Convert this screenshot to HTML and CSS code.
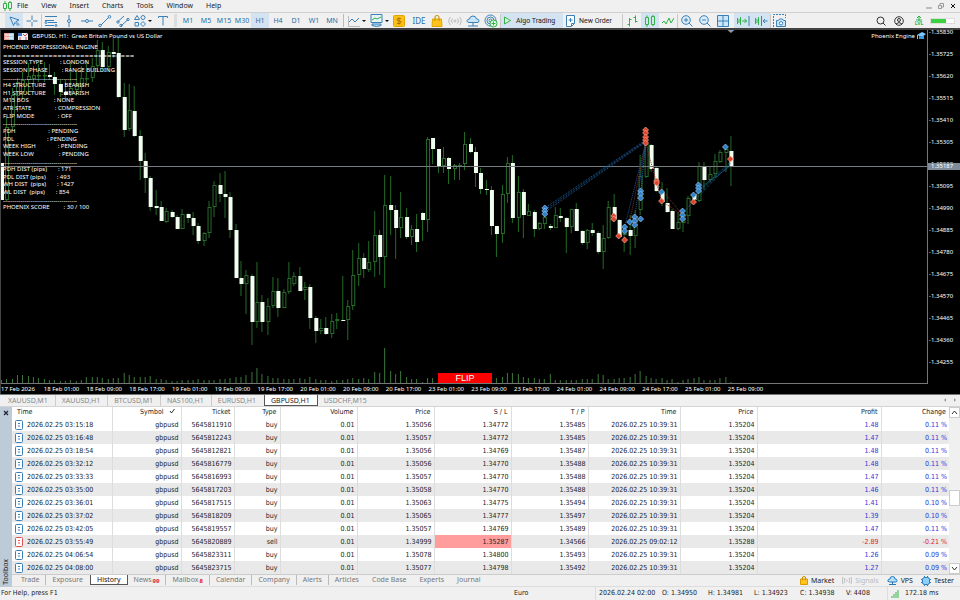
FILE: index.html
```
<!DOCTYPE html>
<html lang="en">

<head>
    <meta charset="UTF-8">
    <meta name="viewport" content="width=device-width, initial-scale=1.0">
    <title>GBPUSD,H1</title>
    <link rel="stylesheet" href="styles.css">
</head>

<body>
    <!-- menu -->
    <nav class="menu">
        <svg class="logo" width="9" height="10" viewBox="0 0 9 10"><path d="M2 0v10M7 0v10" stroke="#2fb344"/><path d="M.5 2.5h3v5h-3zM5.5 1.5h3v6h-3z" fill="#f0f0f0" stroke="#2fb344"/></svg>
        <a href="#">File</a>
        <a href="#">View</a>
        <a href="#">Insert</a>
        <a href="#">Charts</a>
        <a href="#">Tools</a>
        <a href="#">Window</a>
        <a href="#">Help</a>
        <div class="winBtns">
            <button aria-label="Minimize"><svg width="6" height="6"><path d="M0 5h6" stroke="#888"/></svg></button>
            <button aria-label="Restore"><svg width="6" height="6"><path d="M.5 2.5h3v3h-3zM2 2V.5h3.500V4H4" fill="none" stroke="#999"/></svg></button>
            <button aria-label="Close"><svg width="6" height="6"><path d="M1 1l4 4M5 1L1 5" stroke="#111"/></svg></button>
        </div>
    </nav>

    <!-- toolbar -->
    <div class="toolbar">
        <button class="on" aria-label="Cursor"><svg width="12" height="12"><path d="M2 2l3.500 8.500 1.500-3 3 3 1-1-3-3 3-1.500z"/></svg></button>
        <button aria-label="Crosshair"><svg width="12" height="12"><path d="M6 .5v4.500M6 7v4.500M.5 6H5M7 6h4.500"/></svg></button>
        <i class="sep"></i>
        <button aria-label="Lines"><svg width="14" height="12"><path d="M1 1.500h12M1 5.500h9M1 10.500h9M4 7.500h9"/><circle cx="2" cy="7.500" r="1"/><circle cx="12" cy="10.500" r="1"/></svg></button>
        <button aria-label="Vertical line"><svg width="12" height="12"><path d="M6 0v4M6 8v4"/><circle cx="6" cy="6" r="1.500"/></svg></button>
        <button aria-label="Horizontal line"><svg width="12" height="12"><path d="M0 6h4M8 6h4"/><circle cx="6" cy="6" r="1.500"/></svg></button>
        <button aria-label="Trendline"><svg width="14" height="12"><path d="M3 10l7.500-7.500"/><circle cx="2" cy="10.500" r="1.300"/><circle cx="11.500" cy="1.800" r="1.300"/></svg></button>
        <button aria-label="Channel"><svg width="14" height="12"><path d="M2 6.500L8 1M5 11l7-6.500"/><circle cx="2" cy="7" r="1.200"/><circle cx="5" cy="10.500" r="1.200"/><circle cx="12" cy="4.500" r="1.200"/></svg></button>
        <button class="wide" aria-label="Shapes"><svg width="12" height="12"><path d="M.5 4.500L3 .5l2.500 4zM1 7.500h3.500v3.500H1z"/><circle cx="9" cy="2.500" r="2"/><path d="M9 6.500l2.500 2.500L9 11.500 6.500 9z"/></svg><b class="caret"></b></button>
        <button aria-label="Text"><svg width="10" height="10"><path d="M.5 2V.5h9V2M5 .5v9"/></svg></button>
        <i class="grip"></i>
        <button>M1</button>
        <button>M5</button>
        <button>M15</button>
        <button>M30</button>
        <button class="on">H1</button>
        <button>H4</button>
        <button>D1</button>
        <button>W1</button>
        <button>MN</button>
        <i class="grip small"></i>
        <button class="wide" aria-label="Chart type"><svg width="12" height="12"><path d="M.5 1v10.500H12" stroke="#bbb"/><path d="M1 7l3-3 3 3 4-4"/></svg><b class="caret"></b></button>
        <button class="wide" aria-label="Template"><svg width="13" height="13"><path d="M1 .5h11v8H1z" fill="#e6f6f2"/><path d="M2 6l3-2 2 1 4-2" stroke="#38a860"/><path d="M2 10v1.500q4.500 2 9 0V10z" fill="#bcdcf2"/></svg><b class="caret"></b></button>
        <button aria-label="Symbols"><svg width="12" height="12"><rect x=".5" y=".5" width="11" height="11" rx="1" fill="#fdbf16" stroke="#e2a500"/><path d="M8 3.500H5q-1 0-1 1T5 6h2q1 0 1 1T7 8.500H4M6 2.500v7" stroke="#a87400"/></svg></button>
        <i class="gap"></i>
        <button class="ide">IDE</button>
        <button aria-label="Market"><svg width="12" height="12"><path d="M1.500 4h9l.5 7.500H1z" fill="#ffc31c" stroke="#e2a500"/><path d="M4 6V2q0-1.500 2-1.500T8 2v4" stroke="#c58e00"/></svg></button>
        <button aria-label="Signals"><svg class="mute" width="14" height="10"><circle cx="7" cy="5" r="1"/><path d="M4.500 2.500q-2 2.500 0 5M9.500 2.500q2 2.500 0 5M2.500 1q-3.500 4 0 8M11.500 1q3.500 4 0 8"/></svg></button>
        <button aria-label="VPS"><svg width="14" height="12"><path d="M3 7.500Q.5 7 1 5.500q.5-1.500 2.500-1.500Q4 1 7 1t3.500 3Q13 4 13 5.800T11 7.500z" fill="#cbe6f8"/><path d="M7 8v3M2 11h10"/></svg></button>
        <button aria-label="Copy"><svg width="14" height="14"><circle cx="6.500" cy="6.500" r="5.500"/><circle cx="6.500" cy="6.500" r="3.500"/><circle cx="6.500" cy="6.500" r="1.500"/><circle cx="9.500" cy="9.500" r="3.500" fill="#e4f9e6" stroke="#2fb344"/><path d="M9.500 7.500v4M7.500 9.500h4" stroke="#2fb344"/></svg></button>
        <i class="sep"></i>
        <button class="on text algo"><svg width="9" height="9"><path d="M1.500 1l6 3.500-6 3.500z" fill="#dff5e2" stroke="#2fb344"/></svg>Algo Trading</button>
        <button class="text order"><svg width="9" height="12"><path d="M.5 .5h8v8l-3 3h-5z" fill="#fff"/><path d="M4.500 3v4M2.500 5h4M5.500 11V8.500H8"/></svg>New Order</button>
        <i class="sep"></i>
        <button aria-label="Bar chart"><svg class="green" width="12" height="12"><path d="M3.500 3v8.500M1.500 9.500h2M3.500 4.500h2M9.500 .5v7M7.500 2.500h2M9.500 6.500h2"/></svg></button>
        <button class="on" aria-label="Candles"><svg class="green" width="12" height="12"><path d="M1.500 2.500h3v7h-3zM7.500 1.500h3v8h-3zM3 .5v2M3 9.500V12M9 0v1.500M9 9.500V11"/></svg></button>
        <button aria-label="Line chart"><svg class="green" width="12" height="12"><path d="M0 8l2-2 2 3 3-6 2 5 3-5"/></svg></button>
        <i class="sep"></i>
        <button aria-label="Zoom in"><svg width="12" height="12"><circle cx="5" cy="5" r="4.300" fill="#dcedf9"/><path d="M8 8l3.500 3.500M5 3v4M3 5h4"/></svg></button>
        <button aria-label="Zoom out"><svg width="12" height="12"><circle cx="5" cy="5" r="4.300" fill="#dcedf9"/><path d="M8 8l3.500 3.500M3 5h4"/></svg></button>
        <button aria-label="Tile"><svg width="12" height="12"><path d="M.5 .5h11v11H.5zM6 .5v11M.5 6h11" fill="#cbe6f8"/></svg></button>
        <i class="gap"></i>
        <button class="on" aria-label="Scroll to end"><svg width="14" height="10"><path d="M1.500 2v6M4.500 1v8M3 3v4M6 5h5M8.500 3l2 2-2 2" stroke="#2fb344"/><path d="M13 0v10"/></svg></button>
        <button class="on" aria-label="Chart shift"><svg width="14" height="10"><path d="M1.500 2v6M4.500 1v8M3 3v4" stroke="#2fb344"/><path d="M7.500 0v10M9 5h4.500M11 3L9 5l2 2"/></svg></button>
        <i class="sep"></i>
        <button aria-label="Screenshot"><svg width="14" height="14"><path d="M.5 13V.5h12V4" stroke-dasharray="2 1"/><path d="M3.500 6.500h2l1-1.500h3l1 1.500h2v6h-9z" fill="#cbe6f8"/><circle cx="8" cy="9.300" r="1.700" fill="#fff"/></svg></button>
        <div class="right">
            <button aria-label="Search"><svg class="dark" width="10" height="10"><circle cx="4.500" cy="4.500" r="3.500"/><path d="M7 7l2.500 2.500"/></svg></button>
            <button aria-label="Account"><svg class="dark" width="10" height="10"><circle cx="5" cy="5" r="4.300"/><circle cx="5" cy="4" r="1.500"/><path d="M2 8q3-3 6 0"/></svg></button>
            <button class="lvl" aria-label="Level"><svg class="green" width="8" height="6"><path d="M4 1v5M2 3l2-2 2 2M1 5h6"/></svg>LVL</button>
            <div class="power"><span></span></div>
        </div>
    </div>

    <!-- chart -->
    <main class="chart">
        <div class="plotWrap">
            <div class="plot">
                <svg id="candles" viewBox="0 30 928 353" preserveAspectRatio="none"></svg>
                <div class="title">
                    <svg width="10" height="7"><path d="M0 0h5v7H0z" fill="#e8a096"/><path d="M5 0h5v7H5z" fill="#9fd4ee"/><path d="M1 2h8M1 5h8" stroke="#fff"/></svg>
                    <svg width="10" height="7"><path d="M0 0h10v7H0z" fill="#e9eef5"/><path d="M0 0h4v3H0z" fill="#3b6fc4"/><path d="M5 1l2 2 3-3M2 7V4M8 7V4" stroke="#d84343" fill="none"/></svg>
                    <span>GBPUSD, H1:&nbsp; Great Britain Pound vs US Dollar</span>
                </div>
                <ul class="engine">
                    <li>PHOENIX PROFESSIONAL ENGINE</li>
                    <li class="rule">=============================</li>
                    <li>SESSION TYPE           : LONDON</li>
                    <li>SESSION PHASE         : RANGE BUILDING</li>
                    <li class="rule">--------------------------------------</li>
                    <li>H4 STRUCTURE          : BEARISH</li>
                    <li>H1 STRUCTURE          : BEARISH</li>
                    <li>M15 BOS                : NONE</li>
                    <li>ATR STATE               : COMPRESSION</li>
                    <li>FLIP MODE               : OFF</li>
                    <li class="rule">--------------------------------------</li>
                    <li>PDH                     : PENDING</li>
                    <li>PDL                     : PENDING</li>
                    <li>WEEK HIGH              : PENDING</li>
                    <li>WEEK LOW                : PENDING</li>
                    <li class="rule">--------------------------------------</li>
                    <li>PDH DIST (pips)       : 171</li>
                    <li>PDL DIST (pips)       : 493</li>
                    <li>WH DIST  (pips)       : 1427</li>
                    <li>WL DIST  (pips)       : 854</li>
                    <li class="rule">--------------------------------------</li>
                    <li>PHOENIX SCORE         : 30 / 100</li>
                </ul>
                <div class="expert">Phoenix Engine <svg width="9" height="8"><path d="M0 3l5-3 4 2-4 3z" fill="#7cc8ff"/><path d="M2 4v3h5V3L5 5z" fill="#3a9be8"/><path d="M.5 3v4" stroke="#7cc8ff"/></svg></div>
                <button class="flip">FLIP</button>
            </div>
            <div class="times"></div>
        </div>
        <div class="prices"></div>
    </main>

    <!-- chart tabs -->
    <div class="chartTabs">
        <a href="#">XAUUSD,M1</a>
        <a href="#">XAUUSD,H1</a>
        <a href="#">BTCUSD,M1</a>
        <a href="#">NAS100,H1</a>
        <a href="#">EURUSD,H1</a>
        <a href="#" class="active">GBPUSD,H1</a>
        <a href="#">USDCHF,M15</a>
        <svg class="arrows" width="14" height="6"><path d="M3 1v4L1 3zM11 1v4l2-2z" fill="#999"/></svg>
    </div>

    <!-- toolbox -->
    <section class="toolbox">
        <div class="side">
            <button aria-label="Close toolbox"><svg width="6" height="6"><path d="M1 1l4 4M5 1L1 5" stroke="#223" stroke-width="1.200"/></svg></button>
            <span>Toolbox</span>
        </div>
        <div class="content">
            <div class="history">
                <table>
                    <colgroup>
                        <col class="cTime"><col class="cSym"><col class="cTicket"><col class="cType"><col class="cNum"><col class="cNum"><col class="cNum"><col class="cNum"><col class="cClose"><col class="cNum"><col class="cProfit"><col class="cChange">
                    </colgroup>
                    <thead>
                        <tr>
                            <th>Time</th>
                            <th>Symbol <svg width="6" height="6"><path d="M1 3l1.500 2L5.500 1" fill="none" stroke="#333"/></svg></th>
                            <th>Ticket</th>
                            <th>Type</th>
                            <th>Volume</th>
                            <th>Price</th>
                            <th>S / L</th>
                            <th>T / P</th>
                            <th>Time</th>
                            <th>Price</th>
                            <th>Profit</th>
                            <th>Change</th>
                        </tr>
                    </thead>
                    <tbody></tbody>
                </table>
                <div class="scroll">
                    <button aria-label="Up"><svg width="7" height="5"><path d="M1 4l2.500-3L6 4" fill="none" stroke="#333"/></svg></button>
                    <div class="track"><span></span></div>
                    <button aria-label="Down"><svg width="7" height="5"><path d="M1 1l2.500 3L6 1" fill="none" stroke="#333"/></svg></button>
                </div>
            </div>
            <div class="tabs">
                <a href="#">Trade</a>
                <a href="#">Exposure</a>
                <a href="#" class="active">History</a>
                <a href="#">News<sub>99</sub></a>
                <a href="#">Mailbox<sub>8</sub></a>
                <a href="#">Calendar</a>
                <a href="#">Company</a>
                <a href="#">Alerts</a>
                <a href="#">Articles</a>
                <a href="#">Code Base</a>
                <a href="#">Experts</a>
                <a href="#">Journal</a>
                <div class="services">
                    <button><svg width="8" height="9"><path d="M.5 3h7v5.500h-7z" fill="#ffc31c" stroke="#d99c00"/><path d="M2.500 4V1q1.500-1 3 0v3" fill="none" stroke="#c58e00"/></svg>Market</button>
                    <button class="off"><svg width="10" height="7"><path d="M3 1q-1.500 2.500 0 5M7 1q1.500 2.500 0 5M1 0q-1.500 3.500 0 7M9 0q1.500 3.500 0 7M5 2.500v2" fill="none" stroke="#bbb"/></svg>Signals</button>
                    <button><svg width="11" height="9"><path d="M2.500 6Q0 5.500 1 4q.5-1 2-1Q3 .5 5.500 .5T8 3q2 0 2 1.500T9 6z" fill="#b5e0fa" stroke="#2478b8"/><path d="M5.500 6v2.500M2 8.500h7" stroke="#2478b8"/></svg>VPS</button>
                    <button><svg width="10" height="10"><rect x="1.500" y="1.500" width="7" height="7" rx="2" fill="#8fd0fa" stroke="#2478b8"/><path d="M0 3.500h1M0 6.500h1M9 3.500h1M9 6.500h1M3.500 0v1M6.500 0v1M3.500 9v1M6.500 9v1" stroke="#2478b8"/></svg>Tester</button>
                </div>
            </div>
        </div>
    </section>

    <!-- status bar -->
    <footer class="status">
        <span class="help">For Help, press F1</span>
        <span class="profile">Euro</span>
        <span class="date">2026.02.24 02:00</span>
        <span class="ohlc">O: 1.34950</span>
        <span class="ohlc">H: 1.34981</span>
        <span class="ohlc">L: 1.34923</span>
        <span class="ohlc">C: 1.34938</span>
        <span class="ohlc">V: 4408</span>
        <span class="ping"><svg width="9" height="8"><path d="M1 6v2M3 4v4M5 2v6M7 0v8" stroke="#3bb54a"/></svg>172.18 ms</span>
    </footer>

    <script src="script.js"></script>
</body>

</html>
```
FILE: styles.css
```
/* reset */
* {
    margin: 0;
    padding: 0;
    box-sizing: border-box;
}

ul {
    list-style: none;
}

a {
    color: inherit;
    text-decoration: none;
}

button {
    border: 0;
    background: none;
    font: inherit;
    color: inherit;
    display: flex;
    align-items: center;
    justify-content: center;
}

svg {
    flex: none;
    display: block;
}

body {
    display: flex;
    flex-direction: column;
    height: 100vh;
    overflow: hidden;
    background: #f0f0f0;
    color: #222;
    font: 7px/12px "Noto Sans", "DejaVu Sans Condensed", sans-serif;
    white-space: nowrap;
}

/* menu */
.menu {
    display: flex;
    align-items: center;
    gap: 13px;
    height: 13px;
    padding-left: 3px;
    border-bottom: 1px solid #d0d0d0;
}

.logo {
    margin-right: -8px;
}

.winBtns {
    display: flex;
    gap: 6px;
    margin-left: auto;
    padding-right: 4px;
}

/* toolbar */
.toolbar {
    display: flex;
    align-items: center;
    height: 17px;
    padding-left: 5px;
    border-bottom: 2px solid #444;
    color: #2d6ea3;
}

.toolbar button {
    flex: none;
    width: 18px;
    height: 15px;
}

.toolbar svg {
    fill: none;
    stroke: #3a80b8;
}

.toolbar svg.green {
    stroke: #2fb344;
}

.toolbar svg.dark {
    stroke: #333;
}

.toolbar svg.mute {
    stroke: #bbb;
}

.toolbar button.on {
    background: #d4e3f1;
}

.toolbar button.wide {
    width: 22px;
    gap: 2px;
}

.toolbar .ide {
    font-size: 8px;
}

.toolbar button.text {
    justify-content: flex-start;
    color: #222;
    font-family: Roboto, "Noto Sans", sans-serif;
}

.toolbar button.algo {
    width: 62px;
    padding-left: 2px;
    gap: 4px;
}

.toolbar button.order {
    width: 59px;
    padding-left: 3px;
    gap: 4px;
}

.caret {
    border: 2px solid transparent;
    border-top-color: #111;
    border-bottom: 0;
}

.sep {
    width: 1px;
    height: 14px;
    background: #c8c8c8;
}

.gap {
    width: 2px;
}

.grip {
    width: 3px;
    height: 13px;
    margin: 0 2px;
    background: #ddd;
}

.grip.small {
    width: 1px;
    background: #bbb;
}

.right {
    display: flex;
    align-items: center;
    margin-left: auto;
    padding-right: 5px;
}

.toolbar .lvl {
    flex-direction: column;
    width: 22px;
    color: #2fb344;
    font-size: 5px;
    font-weight: bold;
    line-height: 5px;
}

.power {
    width: 25px;
    height: 6px;
    background: #fff;
    border: 1px solid #ddd;
}

.power span {
    display: block;
    width: 65%;
    height: 100%;
    background: #3ad23f;
}

/* chart */
.chart {
    display: flex;
    flex: 1;
    min-height: 0;
    background: #000;
    border-bottom: 1px solid #777;
    color: #fff;
    font-size: 6px;
    line-height: 8px;
}

.plotWrap {
    display: flex;
    flex-direction: column;
    flex: 1;
    min-width: 0;
    border-left: 1px solid #444;
}

.plot {
    position: relative;
    flex: 1;
    min-height: 0;
    border-right: 1px solid #777;
    border-bottom: 1px solid #777;
}

#candles {
    width: 100%;
    height: 100%;
}

.title {
    position: absolute;
    left: 3px;
    top: 2px;
    display: flex;
    align-items: center;
    gap: 4px;
}

.engine {
    position: absolute;
    left: 2px;
    top: 14px;
    display: grid;
    grid-auto-rows: 1fr;
    height: 168px;
    line-height: 7px;
    white-space: pre;
}

.engine .rule {
    font-family: "DejaVu Sans Condensed", "DejaVu Sans", sans-serif;
}

.expert {
    position: absolute;
    right: 1px;
    top: 2px;
    display: flex;
    align-items: center;
    gap: 2px;
}

.flip {
    position: absolute;
    left: 437px;
    bottom: 0;
    width: 54px;
    height: 10px;
    background: #f00;
    color: #fff;
    font: 9px/10px "Liberation Sans", Arial, sans-serif;
}

.times {
    display: flex;
    width: 83%;
    height: 10px;
    line-height: 10px;
}

.times span {
    flex: 1;
    min-width: 0;
}

.prices {
    position: relative;
    width: 32px;
    overflow: hidden;
}

.prices span {
    display: block;
    height: 22px;
    padding-left: 1px;
    line-height: 22px;
}

.prices span:first-child {
    margin-top: -9px;
}

.prices .now {
    position: absolute;
    top: 133px;
    left: 0;
    width: 100%;
    height: 7px;
    padding-left: 3px;
    background: #7f8b99;
    line-height: 7px;
}

/* chart tabs */
.chartTabs {
    display: flex;
    height: 12px;
    padding-left: 2px;
    border-bottom: 1px solid #d4d4d4;
    color: #888;
    line-height: 11px;
}

.chartTabs a {
    padding: 0 7px 0 6px;
    border-right: 1px solid #ccc;
}

.chartTabs a:nth-child(5),
.chartTabs a:nth-child(7) {
    border-color: transparent;
}

.chartTabs .active {
    background: #fff;
    border: 1px solid #555;
    border-top: 0;
    color: #222;
}

.arrows {
    margin: 2px 3px 0 auto;
}

/* toolbox */
.toolbox {
    display: flex;
}

.side {
    display: flex;
    flex-direction: column;
    justify-content: space-between;
    align-items: center;
    width: 12px;
    padding: 3px 0 2px;
    background: #bdcad8;
}

.side span {
    writing-mode: vertical-rl;
    transform: rotate(180deg);
    line-height: 10px;
}

.content {
    flex: 1;
    min-width: 0;
}

.history {
    display: flex;
    background: #fff;
    font-family: "DejaVu Sans Condensed", "Noto Sans", sans-serif;
}

table {
    flex: 1;
    table-layout: fixed;
    border-collapse: collapse;
    line-height: 12px;
}

.cTime {
    width: 100px;
}

.cSym {
    width: 69px;
}

.cTicket {
    width: 53px;
}

.cType {
    width: 46px;
}

.cNum {
    width: 77px;
}

.cClose {
    width: 92px;
}

.cProfit {
    width: 124px;
}

.cChange {
    width: 68px;
}

th,
td {
    text-align: right;
    font-weight: normal;
    border-right: 1px solid #ddd;
}

th {
    height: 11px;
    padding-right: 3px;
    line-height: 11px;
}

td {
    height: 13px;
    padding-right: 2px;
}

th:first-child,
td:first-child {
    text-align: left;
}

th:first-child {
    padding-left: 5px;
}

th svg {
    display: inline-block;
    margin: 0 3px;
}

th:last-child,
td:last-child {
    border-right: 0;
}

tbody tr:nth-child(even) {
    background: #e9e9e9;
}

td:first-child svg {
    display: inline-block;
    margin: 0 4px 0 3px;
    vertical-align: middle;
}

.gain {
    color: #3030d8;
}

.loss {
    color: #e02020;
}

.hit {
    background: #ff9c9c;
}

.scroll {
    display: flex;
    flex-direction: column;
    width: 11px;
    background: #f0f0f0;
}

.scroll button {
    height: 11px;
    background: #fff;
    border: 1px solid #ccc;
}

.track {
    display: flex;
    flex-direction: column;
    flex: 1;
}

.track::before {
    content: "";
    flex: 71;
}

.track::after {
    content: "";
    flex: 57;
}

.track span {
    height: 16px;
    background: #fff;
    border: 1px solid #ccc;
}

.tabs {
    display: flex;
    height: 13px;
    padding-left: 1px;
    border-top: 1px solid #ccc;
    border-bottom: 1px solid #ddd;
    color: #777;
    line-height: 9px;
}

.tabs a {
    height: 10px;
    padding: 0 6px;
    border-right: 1px solid #bbb;
}

.tabs a:first-child {
    padding-left: 8px;
}

.tabs a:nth-child(2),
.tabs a:nth-child(n+9) {
    border-color: transparent;
}

.tabs .active {
    background: #fff;
    border: 1px solid #555;
    border-top: 0;
    color: #111;
}

.tabs sub {
    margin-left: 1px;
    color: #e0202c;
    font-size: 6px;
    font-weight: bold;
    line-height: 6px;
    vertical-align: -1px;
}

.services {
    display: flex;
    gap: 8px;
    margin-left: auto;
    padding-right: 6px;
    color: #222;
}

.services button {
    gap: 3px;
}

.services .off {
    color: #bbb;
}

/* status bar */
.status {
    display: flex;
    height: 13px;
    padding-left: 1px;
    font-family: "DejaVu Sans Condensed", "Noto Sans", sans-serif;
    line-height: 13px;
}

.help {
    flex: 1;
}

.profile {
    width: 81px;
}

.date,
.ping {
    padding-left: 3px;
    border-left: 1px solid #ddd;
}

.date {
    width: 67px;
}

.ohlc {
    width: 46px;
}

.ohlc:nth-child(8) {
    width: 41px;
}

.ping {
    display: flex;
    align-items: center;
    gap: 5px;
    width: 73px;
}
```
FILE: script.js
```
// candles: [high, top, bottom, low, down]
const candles = [
    [163, 163, 200, 200, 1], [118, 127, 200, 201, 0], [88, 95, 127, 130, 0], [78, 82, 96, 112, 0], [72, 80, 92, 100, 0],
    [63, 76, 80, 95, 0], [66, 75, 79, 90, 0], [64, 75, 75, 82, 0], [62, 75, 75, 82, 0], [64, 75, 77, 80, 1],
    [72, 77, 84, 95, 1], [80, 84, 92, 97, 1], [80, 92, 95, 100, 1], [62, 88, 94, 96, 0], [70, 84, 90, 96, 0],
    [66, 78, 86, 92, 0], [60, 78, 78, 85, 0], [58, 66, 78, 82, 0], [40, 50, 66, 72, 0], [42, 50, 67, 72, 1],
    [46, 52, 67, 72, 0], [38, 52, 54, 58, 1], [36, 53, 97, 98, 1], [83, 97, 130, 137, 1], [84, 110, 129, 131, 0],
    [86, 111, 136, 137, 1], [130, 136, 161, 180, 1], [153, 161, 178, 193, 1], [176, 178, 207, 211, 1], [190, 206, 208, 215, 1],
    [201, 207, 221, 221, 1], [208, 211, 222, 223, 0], [210, 212, 217, 218, 1], [215, 217, 229, 229, 1], [209, 214, 229, 229, 0],
    [213, 214, 218, 223, 1], [212, 218, 226, 235, 1], [223, 226, 241, 244, 1], [232, 233, 241, 246, 0], [201, 207, 233, 238, 0],
    [181, 185, 207, 217, 0], [173, 185, 194, 202, 1], [171, 194, 197, 218, 1], [192, 197, 230, 238, 1], [224, 230, 278, 278, 1],
    [261, 278, 284, 296, 1], [270, 275, 284, 314, 0], [274, 276, 322, 345, 1], [262, 302, 322, 328, 0], [295, 302, 322, 332, 1],
    [298, 306, 322, 335, 0], [277, 291, 306, 308, 0], [278, 291, 308, 317, 1], [289, 292, 308, 308, 0], [262, 278, 292, 294, 0],
    [272, 276, 284, 286, 0], [267, 276, 291, 291, 1], [282, 287, 290, 300, 0], [284, 287, 318, 329, 1], [316, 318, 331, 343, 1],
    [319, 328, 331, 334, 0], [317, 328, 334, 335, 1], [314, 321, 334, 338, 0], [313, 319, 321, 329, 0], [276, 320, 321, 321, 1],
    [300, 306, 320, 340, 0], [250, 275, 306, 310, 0], [243, 258, 275, 286, 0], [253, 258, 269, 278, 1], [241, 262, 270, 272, 0],
    [211, 235, 262, 277, 0], [230, 235, 257, 275, 1], [175, 205, 257, 288, 0], [176, 205, 210, 235, 1], [205, 210, 228, 259, 1],
    [192, 217, 228, 238, 0], [208, 217, 237, 239, 1], [225, 229, 237, 245, 0], [214, 229, 242, 252, 1], [212, 213, 220, 241, 1],
    [137, 139, 220, 232, 0], [138, 138, 149, 164, 1], [149, 149, 166, 173, 1], [147, 158, 166, 173, 0], [157, 158, 169, 184, 1],
    [164, 165, 169, 180, 0], [163, 165, 165, 180, 0], [132, 144, 164, 170, 0], [138, 144, 152, 153, 1], [147, 152, 173, 187, 1],
    [168, 173, 189, 194, 1], [180, 189, 190, 195, 1], [186, 190, 226, 235, 1], [226, 226, 234, 257, 1], [185, 194, 234, 243, 0],
    [157, 163, 194, 203, 0], [155, 163, 218, 223, 1], [176, 192, 218, 232, 0], [189, 192, 215, 238, 1], [204, 211, 216, 216, 0],
    [210, 212, 229, 237, 1], [222, 223, 229, 230, 0], [216, 217, 224, 229, 0], [224, 226, 228, 230, 1], [207, 215, 228, 228, 0],
    [208, 216, 218, 222, 1], [217, 218, 227, 253, 1], [209, 209, 227, 233, 0], [203, 209, 231, 231, 1], [230, 231, 243, 245, 1],
    [229, 230, 243, 249, 0], [223, 230, 233, 236, 1], [231, 233, 252, 254, 1], [225, 238, 252, 269, 0], [201, 207, 238, 239, 0],
    [194, 207, 219, 222, 1], [219, 220, 237, 238, 1], [225, 230, 235, 252, 0], [215, 230, 236, 255, 1], [210, 216, 236, 248, 0],
    [155, 176, 210, 215, 0], [140, 144, 177, 178, 0], [144, 145, 169, 172, 1], [167, 168, 191, 192, 1], [182, 192, 202, 206, 1],
    [188, 203, 212, 213, 1], [209, 211, 229, 229, 1], [212, 222, 229, 230, 0], [211, 215, 223, 232, 0], [196, 198, 216, 224, 0],
    [193, 194, 200, 204, 1], [162, 166, 201, 202, 0], [162, 167, 180, 190, 1], [166, 174, 180, 182, 0], [154, 161, 174, 178, 0],
    [150, 152, 162, 163, 0], [146, 149, 153, 172, 0], [136, 151, 166, 186, 1]
];

const volumes = [
    3, 4, 4, 8, 8, 7, 6, 5, 4, 3, 3, 2, 2, 3, 2, 3, 6, 6, 6, 5, 4, 5, 5, 10, 8, 6, 6, 6, 7, 4, 4, 3, 2, 2, 3,
    3, 3, 4, 3, 3, 3, 4, 4, 5, 6, 6, 8, 11, 15, 9, 7, 5, 5, 4, 4, 4, 5, 4, 6, 4, 3, 3, 2, 3, 3, 4, 5, 4, 5, 4,
    11, 10, 35, 12, 9, 12, 6, 4, 4, 1, 5, 5, 4, 5, 6, 4, 5, 6, 7, 6, 5, 5, 4, 5, 6, 10, 10, 9, 6, 5, 5, 4, 4, 9, 3,
    3, 3, 3, 3, 4, 4, 4, 9, 8, 4, 4, 5, 5, 6, 9, 12, 7, 5, 4, 5, 3, 4, 1, 3, 4, 5, 6, 3, 3, 3, 5, 6, 1
];

// deal arrows: [x, y, color]
const deals = [
    [545, 208, 'b'], [545, 211, 'b'], [545, 214, 'b'], [614, 216, 'r'], [614, 219, 'r'], [619, 236, 'r'],
    [625, 227, 'b'], [625, 231, 'b'], [625, 240, 'r'], [630, 222, 'b'], [635, 217, 'b'], [635, 221, 'b'], [635, 225, 'b'],
    [641, 191, 'b'], [641, 194, 'b'], [641, 198, 'b'], [641, 219, 'b'], [646, 130, 'r'], [646, 133, 'r'],
    [646, 137, 'r'], [646, 140, 'r'], [646, 143, 'r'], [657, 181, 'r'], [657, 183, 'r'], [662, 192, 'b'], [662, 201, 'r'],
    [683, 211, 'b'], [683, 215, 'b'], [683, 219, 'b'], [694, 195, 'b'], [694, 202, 'r'], [699, 185, 'b'], [699, 188, 'b'],
    [699, 191, 'b'], [726, 147, 'b'], [731, 159, 'r']
];

// dotted links between deals: [x1, y1, x2, y2, color]
const links = [
    [545, 208, 646, 140, '#1c5c9c'], [545, 210, 646, 141, '#1c5c9c'], [545, 212, 646, 142, '#1c5c9c'],
    [625, 227, 646, 143, '#1d4f9a'], [630, 222, 646, 143, '#8a3020'], [635, 217, 646, 143, '#1d4f9a'], [641, 194, 646, 143, '#1c70b0'],
    [646, 143, 662, 201, '#8a3020'], [657, 183, 683, 215, '#8a3020'], [662, 201, 683, 215, '#8a3020'],
    [683, 213, 731, 163, '#15608c'], [694, 196, 731, 165, '#15608c'], [699, 189, 731, 166, '#15608c'], [699, 191, 731, 162, '#15608c']
];

const step = 5.336;
let svg = '';

volumes.forEach((v, i) => {
    svg += `<path d="M${Math.round(i * step) + 0.5} ${383 - v}V383" stroke="#3c7a3c"/>`;
});

candles.forEach((c, i) => {
    const x = Math.round(i * step);
    const h = Math.max(c[2] - c[1], 1);
    svg += `<path d="M${x + 0.5} ${c[0]}V${c[3]}" stroke="#236b26"/>`;
    if (c[4]) {
        svg += `<rect x="${x - 1}" y="${c[1]}" width="4" height="${h}" fill="#f0fff0"/>`;
    } else {
        svg += `<rect x="${x - 0.5}" y="${c[1] + 0.5}" width="3" height="${Math.max(h - 1, 0.5)}" fill="#000" stroke="#286a2b"/>`;
    }
});

// current price line
svg += '<path d="M0 166.500H928" stroke="#777c84"/>';

links.forEach(l => {
    svg += `<path d="M${l[0]} ${l[1]}L${l[2]} ${l[3]}" stroke="${l[4]}" stroke-dasharray="1 1"/>`;
});

deals.forEach(d => {
    const fill = d[2] === 'b' ? '#3182cc' : '#e0452c';
    const line = d[2] === 'b' ? '#a8d4f4' : '#ffb8a8';
    svg += `<path d="M${d[0]} ${d[1] - 3}l3 3-3 3-3-3z" fill="${fill}" stroke="${line}" stroke-width=".6"/>`;
});

svg += '<path d="M728 30h7l-3.500 3z" fill="#8c98a8"/>';
document.querySelector('#candles').innerHTML = svg;

// time scale
const times = document.querySelector('.times');
times.innerHTML = '<span>17 Feb 2026</span>';
for (let day of [18, 19, 20, 23, 24, 25]) {
    for (let hour of ['01', '09', '17']) {
        if (day === 25 && hour === '17') continue;
        times.innerHTML += `<span>${day} Feb ${hour}:00</span>`;
    }
}

// price scale
const prices = document.querySelector('.prices');
for (let i = 0; i < 16; i++) {
    prices.innerHTML += `<span>-${((135830 - i * 105) / 100000).toFixed(5)}</span>`;
}
prices.innerHTML += '<span class="now">1.35187</span>';

// history rows: time, ticket, price, s/l, t/p, profit, change
const rows = [
    ['03:15:18', '5645811910', '1.35056', '1.34772', '1.35485', '1.48', '0.11'],
    ['03:16:48', '5645812243', '1.35057', '1.34772', '1.35485', '1.47', '0.11'],
    ['03:18:54', '5645812821', '1.35056', '1.34769', '1.35487', '1.48', '0.11'],
    ['03:32:12', '5645816779', '1.35056', '1.34770', '1.35488', '1.48', '0.11'],
    ['03:33:33', '5645816993', '1.35057', '1.34770', '1.35488', '1.47', '0.11'],
    ['03:35:00', '5645817203', '1.35058', '1.34770', '1.35488', '1.46', '0.11'],
    ['03:36:01', '5645817515', '1.35063', '1.34775', '1.35494', '1.41', '0.10'],
    ['03:37:02', '5645818209', '1.35065', '1.34777', '1.35497', '1.39', '0.10'],
    ['03:42:05', '5645819557', '1.35057', '1.34769', '1.35489', '1.47', '0.11'],
    ['03:55:49', '5645820889', '1.34999', '1.35287', '1.34566', '-2.89', '-0.21'],
    ['04:06:54', '5645823311', '1.35078', '1.34800', '1.35493', '1.26', '0.09'],
    ['04:08:00', '5645823715', '1.35077', '1.34798', '1.35492', '1.27', '0.09']
];

const tbody = document.querySelector('tbody');
let html = '';
for (let r of rows) {
    const sell = r[5] < 0;
    const color = sell ? '#e05050' : '#3a80b8';
    const cls = sell ? 'loss' : 'gain';
    html += `<tr>
        <td><svg width="8" height="10"><rect x=".5" y=".5" width="7" height="9" rx="1" fill="#fff" stroke="${color}"/><path d="M3 3.500h2M3 6h2" stroke="${color}"/></svg>2026.02.25 ${r[0]}</td>
        <td>gbpusd</td>
        <td>${r[1]}</td>
        <td>${sell ? 'sell' : 'buy'}</td>
        <td>0.01</td>
        <td>${r[2]}</td>
        <td class="${sell ? 'hit' : ''}">${r[3]}</td>
        <td>${r[4]}</td>
        <td>2026.02.25 ${sell ? '09:02:12' : '10:39:31'}</td>
        <td>${sell ? '1.35288' : '1.35204'}</td>
        <td class="${cls}">${r[5]}</td>
        <td class="${cls}">${r[6]} %</td>
    </tr>`;
}
tbody.innerHTML = html;
```
